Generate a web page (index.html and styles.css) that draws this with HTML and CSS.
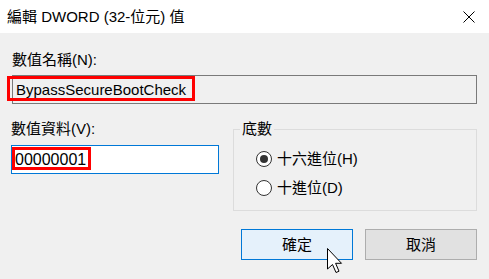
FILE: index.html
```html
<!DOCTYPE html>
<html>
<head>
    <title>編輯 DWORD (32-位元) 值</title>
    <meta name="viewport" content="width=device-width, initial-scale=1">
    <link rel="stylesheet" href="styles.css">
</head>
<body>
    <div class="dialog">
        <div class="titlebar">
            <span class="title">編輯 DWORD (32-位元) 值</span>
            <div class="close">
                <svg width="12" height="12" viewBox="0 0 12 12">
                    <path d="M0.5 0.5 L11.5 11.5 M11.5 0.5 L0.5 11.5" stroke="#000" stroke-width="1" fill="none"/>
                </svg>
            </div>
        </div>

        <div class="content">
            <div class="label">數值名稱(N):</div>
            <div class="field field-readonly">
                <span>BypassSecureBootCheck</span>
                <div class="mark mark-name"></div>
            </div>

            <div class="lower">
                <div class="data-col">
                    <div class="label">數值資料(V):</div>
                    <div class="field field-active">
                        <span class="digits">00000001</span>
                        <div class="mark mark-data"></div>
                    </div>
                </div>

                <fieldset class="group">
                    <legend>底數</legend>
                    <div class="radios">
                        <div class="radio-row">
                            <span class="radio checked"></span>
                            <span>十六進位(H)</span>
                        </div>
                        <div class="radio-row">
                            <span class="radio"></span>
                            <span>十進位(D)</span>
                        </div>
                    </div>
                </fieldset>
            </div>

            <div class="buttons">
                <div class="button button-default">確定</div>
                <div class="button">取消</div>
            </div>
        </div>

        <svg class="cursor" width="16" height="26" viewBox="0 0 16 26">
            <path d="M0.5 0.5 L0.5 21 L5.5 16.5 L9 24.5 L12 23.2 L8.6 15.3 L14.5 15.3 Z" fill="#fff" stroke="#000" stroke-width="1" stroke-linejoin="miter"/>
        </svg>
    </div>
</body>
</html>
```

FILE: styles.css
```css
body {
    margin: 0;
    font-family: "Liberation Sans", "Noto Sans CJK TC", sans-serif;
    font-size: 15px;
    line-height: 18px;
    color: #000;
    background: #f0f0f0;
}
.dialog {
    position: relative;
    width: 489px;
    height: 279px;
    background: #f0f0f0;
    overflow: hidden;
}
.titlebar {
    height: 33px;
    background: #fff;
    display: flex;
    align-items: center;
    justify-content: space-between;
    padding-left: 7px;
    box-sizing: border-box;
}
.close {
    width: 40px;
    height: 33px;
    display: flex;
    align-items: center;
    justify-content: center;
}
.content {
    padding: 18px 12px 0 12px;
}
.field {
    position: relative;
    height: 29px;
    box-sizing: border-box;
    padding-left: 3px;
    display: flex;
    align-items: center;
}
.label {
    height: 18px;
}
.content > .field-readonly {
    margin-top: 6px;
}
.field-readonly {
    border: 1px solid #7a7a7a;
    background: #f0f0f0;
}
.field-active {
    margin-top: 7px;
    border: 1px solid #0078d7;
    background: #fff;
}
.digits {
    font-size: 16px;
}
.mark {
    position: absolute;
    border: 3px solid #ff0000;
    box-sizing: border-box;
}
.mark-name {
    left: -6px;
    top: 0;
    width: 188px;
    height: 25px;
}
.mark-data {
    left: 0;
    top: 1px;
    width: 79px;
    height: 23px;
}
.lower {
    display: flex;
    gap: 14px;
    margin-top: 16px;
}
.data-col {
    width: 208px;
    margin-left: -1px;
}
.group {
    width: 244px;
    box-sizing: border-box;
    margin: 0;
    padding: 0;
    border: 1px solid #dcdcdc;
    min-inline-size: 0;
}
.group legend {
    margin-left: 6px;
    padding: 0 2px;
    line-height: 18px;
}
.radios {
    padding: 6px 0 8px 22px;
}
.radio-row {
    height: 29px;
    display: flex;
    align-items: center;
    gap: 5px;
}
.radio {
    width: 16px;
    height: 16px;
    box-sizing: border-box;
    border: 1px solid #333;
    border-radius: 50%;
    background: #fff;
    display: flex;
    align-items: center;
    justify-content: center;
}
.radio.checked::after {
    content: "";
    width: 8px;
    height: 8px;
    border-radius: 50%;
    background: #333;
}
.buttons {
    display: flex;
    justify-content: flex-end;
    gap: 12px;
    margin-top: 18px;
}
.button {
    width: 112px;
    height: 31px;
    box-sizing: border-box;
    border: 1px solid #adadad;
    background: #e1e1e1;
    display: flex;
    align-items: center;
    justify-content: center;
}
.button-default {
    border-color: #0078d7;
    background: #e5f1fb;
}
.cursor {
    position: absolute;
    left: 327px;
    top: 248px;
}
```
